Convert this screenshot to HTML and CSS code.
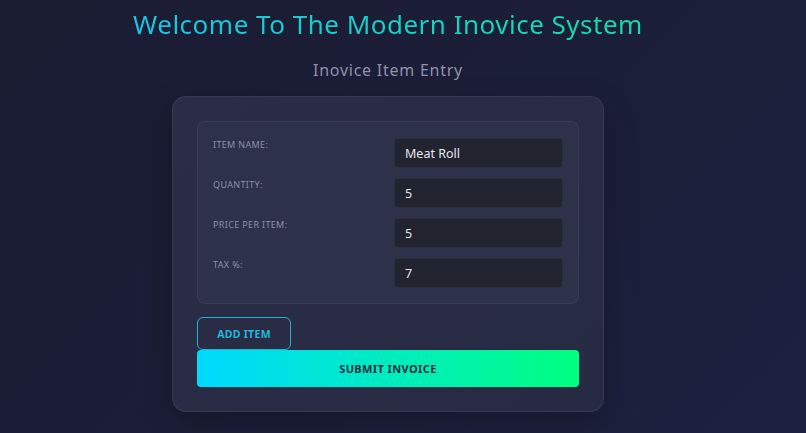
FILE: index.html
```html
<!DOCTYPE html>
<html lang="en">
<head>
<meta charset="utf-8">
<title>Modern Inovice System</title>
<link rel="stylesheet" href="styles.css">
</head>
<body>
<main class="page">
  <h1 class="title">Welcome To The Modern Inovice System</h1>
  <h2 class="subtitle">Inovice Item Entry</h2>
  <section class="card">
    <div class="fields">
      <label class="label" for="name">Item Name:</label>
      <input class="input" id="name" type="text" value="Meat Roll">
      <label class="label" for="qty">Quantity:</label>
      <input class="input" id="qty" type="text" value="5">
      <label class="label" for="price">Price Per Item:</label>
      <input class="input" id="price" type="text" value="5">
      <label class="label" for="tax">Tax %:</label>
      <input class="input" id="tax" type="text" value="7">
    </div>
    <div class="actions">
      <button class="btn-add" type="button">Add Item</button>
      <button class="btn-submit" type="button">Submit Invoice</button>
    </div>
  </section>
</main>
</body>
</html>
```
FILE: styles.css
```css
* { box-sizing: border-box; }
html, body { height: 100%; }
body {
  margin: 0;
  font-family: "Noto Sans", "Open Sans", sans-serif;
  background: linear-gradient(135deg, #1a1c32 0%, #1b1e37 50%, #1d2140 100%);
  color: #e0e0e0;
  overflow: hidden;
}
.page {
  display: flex;
  flex-direction: column;
  align-items: center;
  padding: 0 30px 0 0;
}
.title {
  margin: 5px 0 0;
  font-size: 26px;
  font-weight: 400;
  letter-spacing: 0.5px;
  line-height: 38px;
  background: linear-gradient(90deg, #18c6e2 0%, #17d6bb 70%, #16dca8 100%);
  -webkit-background-clip: text;
  background-clip: text;
  color: transparent;
}
.subtitle {
  margin: 16px 0 0;
  font-size: 16px;
  font-weight: 400;
  letter-spacing: 0.75px;
  line-height: 22px;
  color: #8d91ab;
}
.card {
  margin-top: 15px;
  width: 432px;
  padding: 24px;
  background: linear-gradient(135deg, #2a2d45 0%, #262a42 100%);
  border: 1px solid rgba(255, 255, 255, 0.07);
  border-radius: 14px;
  box-shadow: 0 10px 30px rgba(0, 0, 0, 0.25);
}
.fields {
  display: grid;
  grid-template-columns: 1fr 1fr;
  column-gap: 12px;
  row-gap: 10px;
  padding: 16px 15px 15px;
  background: #2d3149;
  border: 1px solid rgba(255, 255, 255, 0.06);
  border-radius: 8px;
}
.label {
  padding-top: 1px;
  font-size: 9px;
  letter-spacing: 0.35px;
  text-transform: uppercase;
  color: #8c90a9;
  line-height: 12px;
}
.input {
  height: 30px;
  width: 100%;
  padding: 0 10px;
  font-family: inherit;
  font-size: 12.5px;
  color: #e6e6ec;
  background: #21232f;
  border: 1px solid rgba(255, 255, 255, 0.05);
  border-radius: 4px;
  outline: none;
}
.actions {
  display: flex;
  flex-direction: column;
  align-items: flex-start;
  margin-top: 13px;
}
.btn-add {
  width: 94px;
  height: 33px;
  font-family: "Noto Sans", "Open Sans", sans-serif;
  font-size: 10.5px;
  font-weight: 700;
  letter-spacing: 0.3px;
  text-transform: uppercase;
  color: #22b8dc;
  background: transparent;
  border: 1.5px solid #1fb3d6;
  border-radius: 6px;
}
.btn-submit {
  width: 100%;
  height: 37px;
  font-family: "Noto Sans", "Open Sans", sans-serif;
  font-size: 11px;
  font-weight: 700;
  letter-spacing: 0.4px;
  text-transform: uppercase;
  color: #1b3040;
  background: linear-gradient(90deg, #00d9ff 0%, #00ff80 100%);
  border: none;
  border-radius: 4px;
}
```
